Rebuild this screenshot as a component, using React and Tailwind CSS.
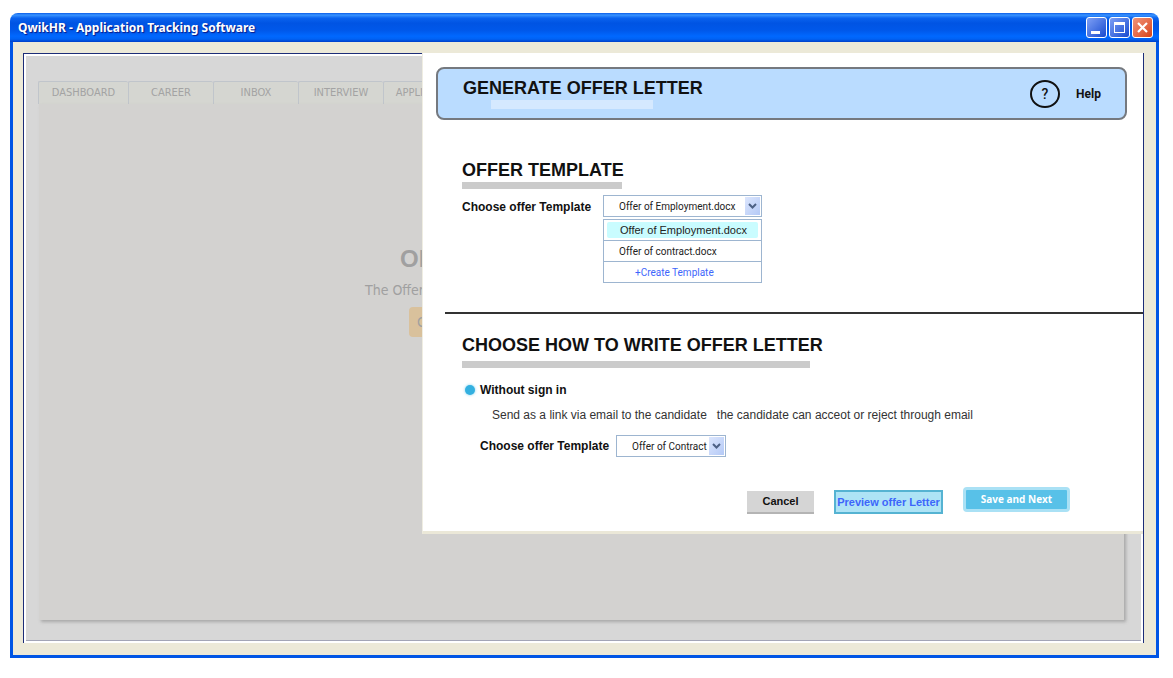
const tabs = ["DASHBOARD", "CAREER", "INBOX", "INTERVIEW", "APPLICANTS"];

function Chevron() {
  return (
    <span className="pointer-events-none col-start-1 row-start-1 mr-px flex h-[18px] w-[15px] items-center justify-center justify-self-end bg-linear-to-br from-[#dce6fd] to-[#b4c9f6]">
      <svg viewBox="0 0 9 6" className="h-[6px] w-[9px]" fill="none" stroke="#4d6185" strokeWidth="2">
        <path d="M1 1 L4.500 4.500 L8 1" />
      </svg>
    </span>
  );
}

function Picker({ id, options, className }) {
  return (
    <span className={`grid items-center border border-[#9db5d0] bg-white ${className}`}>
      <select
        id={id}
        className="col-start-1 row-start-1 h-5 w-full appearance-none bg-transparent pl-[15px] font-['Roboto',sans-serif] text-[10px] text-[#222] outline-none"
      >
        {options.map((o) => (
          <option key={o}>{o}</option>
        ))}
      </select>
      <Chevron />
    </span>
  );
}

function TitleBar() {
  const box = "flex size-[21px] items-center justify-center rounded-[3px] border border-white";
  return (
    <header className="flex h-[29px] items-center justify-between rounded-t-lg bg-[linear-gradient(180deg,#0a5ce8_0%,#3a94ff_7%,#0a62ee_18%,#0054e3_35%,#0058ea_60%,#0068ff_80%,#0062f4_90%,#003fc8_100%)] pr-[6px] pl-2">
      <h1 className="font-['Noto_Sans',sans-serif] text-[12px] font-bold text-white [text-shadow:1px_1px_1px_#0a1883]">
        QwikHR - Application Tracking Software
      </h1>
      <div className="flex gap-[2px]">
        <button aria-label="Minimize" className={`${box} bg-linear-to-br from-[#7f9ff5] to-[#1748cf]`}>
          <svg viewBox="0 0 19 19" className="size-[19px]">
            <rect x="4" y="13" width="9" height="3" fill="#fff" />
          </svg>
        </button>
        <button aria-label="Maximize" className={`${box} bg-linear-to-br from-[#7f9ff5] to-[#1748cf]`}>
          <svg viewBox="0 0 19 19" className="size-[19px]">
            <path d="M4 4H15V15H4Z M5 7V14H14V7Z" fill="#fff" fillRule="evenodd" />
          </svg>
        </button>
        <button aria-label="Close" className={`${box} bg-linear-to-br from-[#f09378] to-[#d8400f]`}>
          <svg viewBox="0 0 19 19" className="size-[19px]" stroke="#fff" strokeWidth="2.200">
            <path d="M5 5 L14 14 M14 5 L5 14" />
          </svg>
        </button>
      </div>
    </header>
  );
}

function Backdrop() {
  return (
    <div className="flex grow flex-col border-b border-[#a3a5b6] bg-[#d7d7d7] pt-[25px] pr-[17px] pb-5 pl-3">
      <nav className="flex items-end font-['DejaVu_Sans_Condensed','DejaVu_Sans',sans-serif] text-[11px] text-[#a3a3a3]">
        {tabs.map((t, i) => (
          <a
            key={t}
            href="#"
            className={`flex h-[23px] items-center justify-center rounded-t-xs border-t border-l border-[#c0c5cb] bg-[#d5d6d1] ${i === 0 ? "w-[90px]" : "w-[85px]"}`}
          >
            {t}
          </a>
        ))}
      </nav>
      <div className="ml-px flex grow flex-col items-start bg-[#d3d2d0] pt-[141px] text-[#a0a0a0] shadow-[2px_2px_3px_#a8a8a8]">
        <h2 className="ml-[361px] text-[24px] leading-7 font-bold">OFFER</h2>
        <p className="mt-1 ml-[326px] font-['DejaVu_Sans_Condensed','DejaVu_Sans',sans-serif] text-[14px] leading-[26px]">
          The Offer
        </p>
        <button className="mt-1 ml-[370px] h-[30px] rounded-sm bg-[#d9c19c] px-2 text-[14px]">Create</button>
      </div>
    </div>
  );
}

function OfferDialog() {
  return (
    <section
      role="dialog"
      aria-label="Generate offer letter"
      className="absolute -top-px right-0 left-[398px] border-b-[3px] border-l border-b-[#ebe8d8] border-l-[#efede2] bg-white pb-[14px] text-[#111]"
    >
      <header className="mt-[14px] mr-4 ml-[13px] flex h-[53px] justify-between rounded-lg border-2 border-[#75797f] bg-[#badcff] pr-6 pl-[25px]">
        <div>
          <h2 className="mt-[7px] text-[18px] leading-6 font-bold">GENERATE OFFER LETTER</h2>
          <div className="ml-7 h-[9px] w-[162px] bg-[#d5e9ff]" />
        </div>
        <a href="#" className="flex items-center gap-4 font-['Roboto',sans-serif] text-[12px] font-bold">
          <svg viewBox="0 0 30 28" className="h-7 w-[30px]">
            <ellipse cx="15" cy="14" rx="14" ry="13" fill="none" stroke="#111" strokeWidth="2" />
            <text x="15" y="19" textAnchor="middle" fontSize="14" fontWeight="500" fill="#111">
              ?
            </text>
          </svg>
          Help
        </a>
      </header>

      <div className="mt-[38px] ml-[39px]">
        <h3 className="text-[18px] leading-6 font-bold">OFFER TEMPLATE</h3>
        <div className="h-[7px] w-40 bg-[#cbcbcb]" />
        <div className="mt-[6px] flex">
          <label htmlFor="template" className="w-[141px] text-[12px] leading-[24px] font-bold">
            Choose offer Template
          </label>
          <div className="w-[159px]">
            <Picker id="template" className="w-full" options={["Offer of Employment.docx", "Offer of contract.docx"]} />
            <ul className="mt-[2px] divide-y divide-[#9db5d0] border border-[#9db5d0] font-['Roboto',sans-serif] text-[10px] text-[#222]">
              <li className="px-[3px] py-[2px]">
                <button className="h-4 w-full rounded-xs bg-[#c9fcff] pl-[13px] text-left font-['Liberation_Sans',sans-serif] text-[11px]">
                  Offer of Employment.docx
                </button>
              </li>
              <li>
                <button className="h-5 w-full pl-[15px] text-left">Offer of contract.docx</button>
              </li>
              <li>
                <button className="h-5 w-full pl-[31px] text-left text-[#3d66fb]">+Create Template</button>
              </li>
            </ul>
          </div>
        </div>
      </div>

      <hr className="mt-[29px] ml-[22px] border-t-2 border-[#333]" />

      <div className="mt-[19px] ml-[39px]">
        <h3 className="text-[18px] leading-6 font-bold">CHOOSE HOW TO WRITE OFFER LETTER</h3>
        <div className="mt-1 h-[7px] w-[348px] bg-[#cbcbcb]" />
        <label className="mt-[11px] flex items-center gap-[5px] pl-[3px] text-[12px] leading-[22px] font-bold">
          <input
            type="radio"
            name="mode"
            defaultChecked
            className="size-[10px] appearance-none rounded-full bg-[#33b0e0] shadow-[0_0_3px_#7fd0ee]"
          />
          Without sign in
        </label>
        <p className="mt-[3px] ml-[30px] text-[12px] leading-[22px] whitespace-pre text-[#333]">
          {"Send as a link via email to the candidate   the candidate can acceot or reject through email"}
        </p>
        <div className="mt-[9px] ml-[18px] flex items-center">
          <label htmlFor="contract" className="w-[136px] text-[12px] leading-[22px] font-bold">
            Choose offer Template
          </label>
          <Picker id="contract" className="w-[110px]" options={["Offer of Contract"]} />
        </div>
      </div>

      <div className="mt-[30px] mr-[73px] flex items-center justify-end gap-[20px] text-[11px] font-bold">
        <button className="h-[23px] w-[67px] border-b-2 border-[#b4b4b4] bg-[#d5d5d5]">Cancel</button>
        <button className="h-6 w-[109px] border-2 border-[#55b3d2] bg-[#aee3f5] text-[#3d66fb]">Preview offer Letter</button>
        <button className="mb-[5px] h-[25px] w-[107px] rounded-sm border-3 border-[#aae1f5] bg-[#58c1e8] font-['Open_Sans',sans-serif] text-[10px] text-white">
          Save and Next
        </button>
      </div>
    </section>
  );
}

export default function App() {
  return (
    <main className="min-h-screen bg-white px-[10px] pt-[13px] pb-5 pr-[14px] font-['Liberation_Sans',sans-serif]">
      <TitleBar />
      <div className="flex border-x-3 border-b-3 border-[#0055e5] bg-[#ece9d8] px-3 pt-[11px] pb-3 pl-[10px]">
        <div className="relative flex min-h-[590px] grow flex-col border-x border-t border-[#1c2d78] bg-white px-[2px] pt-[2px] pb-[2px]">
          <Backdrop />
          <OfferDialog />
        </div>
      </div>
    </main>
  );
}
